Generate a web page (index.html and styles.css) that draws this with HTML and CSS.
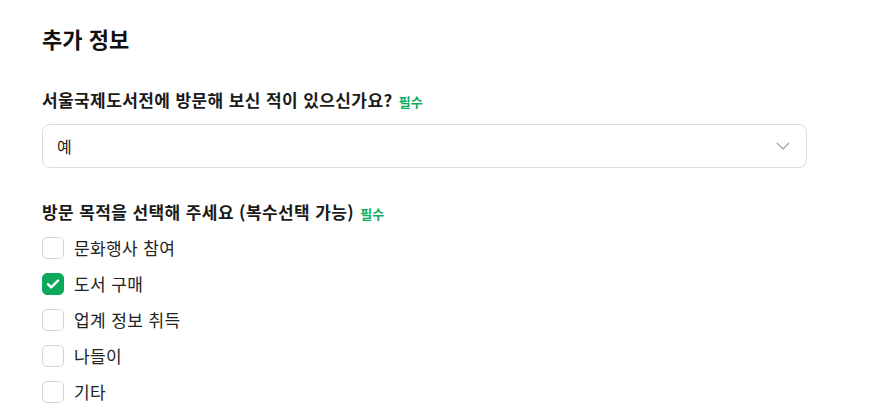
FILE: index.html
```html
<!DOCTYPE html>
<html lang="ko">
<head>
<meta charset="utf-8">
<link rel="stylesheet" href="styles.css">
</head>
<body>
<div class="page">
  <h2 class="title">추가 정보</h2>

  <div class="field">
    <div class="label">서울국제도서전에 방문해 보신 적이 있으신가요? <span class="req">필수</span></div>
    <div class="select">
      <span class="value">예</span>
      <svg class="chev" width="14" height="8" viewBox="0 0 14 8"><path d="M1 1l6 6 6-6" fill="none" stroke="#9aa0a6" stroke-width="1.2"/></svg>
    </div>
  </div>

  <div class="field field2">
    <div class="label">방문 목적을 선택해 주세요 (복수선택 가능) <span class="req">필수</span></div>
    <div class="checks">
      <label class="check"><span class="box"></span><span>문화행사 참여</span></label>
      <label class="check"><span class="box on"><svg width="14" height="12" viewBox="0 0 14 12"><path d="M2 6.2l3.2 3.2L12 2.6" fill="none" stroke="#fff" stroke-width="2.4" stroke-linecap="round" stroke-linejoin="round"/></svg></span><span>도서 구매</span></label>
      <label class="check"><span class="box"></span><span>업계 정보 취득</span></label>
      <label class="check"><span class="box"></span><span>나들이</span></label>
      <label class="check"><span class="box"></span><span>기타</span></label>
    </div>
  </div>
</div>
</body>
</html>
```
FILE: styles.css
```css
* { box-sizing: border-box; }
html, body { margin: 0; padding: 0; background: #fff; }
body {
  font-family: "Noto Sans CJK KR", "Noto Sans", sans-serif;
  color: #111;
}
.page {
  padding: 22px 0 0 42px;
  width: 807px;
}
.title {
  margin: 0;
  font-size: 22px;
  font-weight: 700;
  line-height: 32px;
  letter-spacing: 0;
}
.field { margin-top: 34px; }
.field2 { margin-top: 32px; }
.label {
  font-size: 17px;
  font-weight: 700;
  line-height: 24px;
  letter-spacing: 0.4px;
  color: #1a1a1a;
}
.req {
  font-size: 13px;
  font-weight: 700;
  color: #0eaa5c;
  margin-left: 1px;
  letter-spacing: 0;
}
.select {
  margin-top: 10px;
  height: 44px;
  border: 1px solid #dcdcdc;
  border-radius: 8px;
  display: flex;
  align-items: center;
  justify-content: space-between;
  padding: 0 16px 0 14px;
}
.value { font-size: 16px; color: #222; }
.checks {
  margin-top: 11px;
  display: flex;
  flex-direction: column;
  gap: 14px;
}
.check {
  display: flex;
  align-items: center;
  gap: 10px;
  font-size: 17px;
  color: #222;
  line-height: 22px;
  letter-spacing: 0.4px;
}
.box {
  width: 22px;
  height: 22px;
  border: 1px solid #d4d4d4;
  border-radius: 5px;
  display: flex;
  align-items: center;
  justify-content: center;
  flex: none;
}
.box.on {
  background: #0aa95b;
  border-color: #0aa95b;
}
```
